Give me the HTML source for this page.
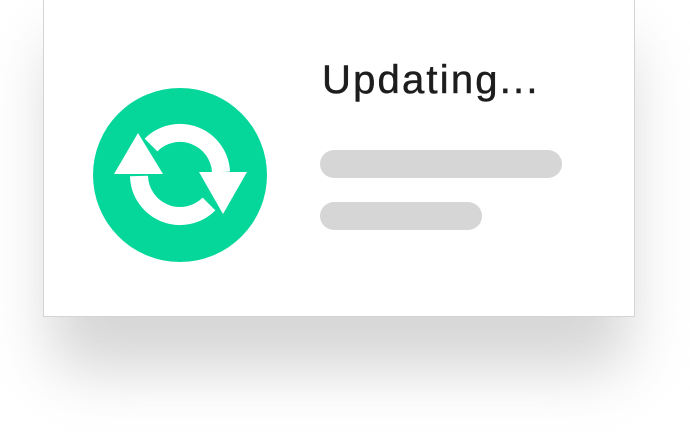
<!DOCTYPE html>
<html><head><style>
html,body{margin:0;padding:0;background:#fff;width:690px;height:432px;overflow:hidden;position:relative;font-family:"Liberation Sans",sans-serif}
.shadow{position:absolute;left:50px;top:40px;width:580px;height:330px;background:#d6d6d6;filter:blur(30px);border-radius:30px}
.card{position:absolute;left:43px;top:-2px;width:590px;height:317px;background:#fff;border:1px solid #d4d4d4}
.t{position:absolute;left:322px;top:58px;font-size:40px;color:#1d1d1d;letter-spacing:2.2px;-webkit-text-stroke:0.5px #1d1d1d}
.b{position:absolute;background:#d6d6d6;border-radius:14px}
</style></head><body>
<div class="shadow"></div>
<div class="card"></div>
<svg style="position:absolute;left:0;top:0" width="690" height="432">
<circle cx="180" cy="175" r="87" fill="#05d79b"/>
<g fill="none" stroke="#fff" stroke-width="18">
<path d="M139 176 A41 41 0 0 0 209 204"/>
<path d="M221 172 A41 41 0 0 0 151 145"/>
</g>
<polygon points="138,133 114,174 163,174" fill="#fff"/>
<polygon points="223,214 199,172 247,172" fill="#fff"/>
</svg>
<div class="t">Updating...</div>
<div class="b" style="left:320px;top:150px;width:242px;height:28px"></div>
<div class="b" style="left:320px;top:202px;width:162px;height:28px"></div>
</body></html>
